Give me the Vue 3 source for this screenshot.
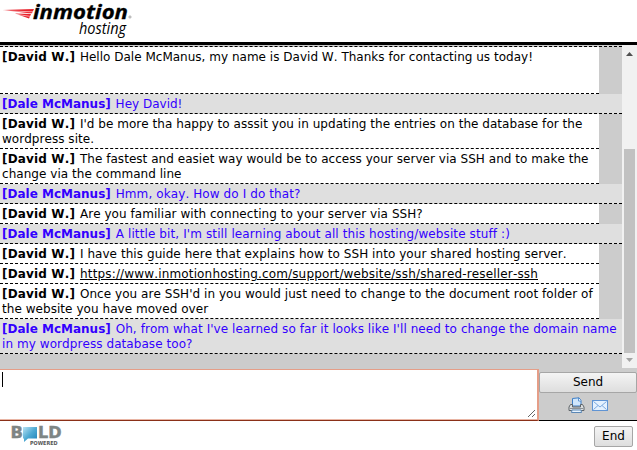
<template>
  <div class="chat-window">
    <header class="header">
      <svg class="logo" width="140" height="42" viewBox="0 0 140 42">
        <path d="M3 10 L34 9 L32 13.2 L29 13.2 Z" fill="#e8202a" />
        <path d="M15 13.5 L31 14 L29 18.5 Z" fill="#e8202a" />
        <path d="M4 10.8 L33 11.8 M16 14.3 L30 16.3" stroke="#fff" stroke-width="0.6" />
        <text x="33" y="19" class="logo-name" textLength="95" lengthAdjust="spacingAndGlyphs">inmotion</text>
        <circle cx="130" cy="17" r="1.1" class="logo-mark" />
        <text x="79" y="34" class="logo-sub" textLength="47" lengthAdjust="spacingAndGlyphs">hosting</text>
      </svg>
    </header>

    <main class="chat">
      <div class="messages">
        <div
          v-for="(message, index) in messages"
          :key="index"
          class="message"
          :class="[message.mine ? 'visitor' : 'operator', { first: index === 0 }]"
          :style="{ letterSpacing: `${message.spacing || 0}px` }"
        >
          <b class="name">[{{ message.mine ? 'Dale McManus' : 'David W.' }}]</b>&nbsp;<a v-if="message.link" class="link">{{ message.text }}</a><template v-else>{{ message.text }}</template>
        </div>
      </div>
      <div class="scrollbar">
        <svg class="arrow" width="15" height="17" viewBox="0 0 15 17">
          <path d="M4 11 L7.5 7 L11 11 Z" fill="#505050" />
        </svg>
        <div class="track">
          <div class="thumb"></div>
        </div>
        <svg class="arrow" width="15" height="15" viewBox="0 0 15 15">
          <path d="M4 5 L11 5 L7.5 9 Z" fill="#a3a3a3" />
        </svg>
      </div>
    </main>

    <section class="compose">
      <div class="input">
        <div class="caret"></div>
        <svg class="grip" width="9" height="9" viewBox="0 0 9 9">
          <path d="M1 8 L8 1 M5 8 L8 5" stroke="#555" stroke-width="0.9" fill="none" />
        </svg>
      </div>
      <div class="actions">
        <button class="send" @click="send">Send</button>
        <div class="icons">
          <svg width="17" height="17" viewBox="0 0 17 17">
            <path d="M4.5 9 V1.5 L11 0.8 L13 3.5 V9 Z" fill="#cfe6fc" stroke="#3f7fc6" />
            <path d="M10.5 1 V4 H13" fill="#fff" stroke="#3f7fc6" stroke-width="0.8" />
            <path d="M2.5 7.5 H4.5 V10 H12.5 V7.5 H14.5 L16 10 V13.5 H1 V10 Z" fill="#dcdfe1" stroke="#5f6569" />
            <path d="M2 11.5 H15" stroke="#8d9296" />
            <path d="M4 13 H13 L13.5 15.5 H3.5 Z" fill="#e9f4ff" stroke="#5a87b5" />
          </svg>
          <svg width="17" height="17" viewBox="0 0 17 17">
            <rect x="0.5" y="3.5" width="15" height="10" fill="#e4f1ff" stroke="#6094d4" />
            <path d="M1.5 4.5 L8 10 L14.5 4.5 M1.5 12.5 L6 8.5 M14.5 12.5 L10 8.5" fill="none" stroke="#7caae0" />
          </svg>
        </div>
      </div>
    </section>

    <footer class="footer">
      <svg class="bold-logo" width="54" height="21" viewBox="0 0 54 21">
        <defs>
          <linearGradient id="bubble" x1="0" y1="0" x2="1" y2="1">
            <stop offset="0" stop-color="#b9e2f3" />
            <stop offset="0.5" stop-color="#4eaad3" />
            <stop offset="1" stop-color="#1d80b6" />
          </linearGradient>
        </defs>
        <text x="-0.5" y="12" class="bold-name" textLength="12.5" lengthAdjust="spacingAndGlyphs">B</text>
        <path d="M12 1 H26 V12.5 H17 L13 16 V12.5 H12 Z" fill="url(#bubble)" />
        <text x="27" y="12" class="bold-name" textLength="23.5" lengthAdjust="spacingAndGlyphs">LD</text>
        <text x="19" y="18.5" class="bold-sub" textLength="27.5" lengthAdjust="spacingAndGlyphs">POWERED</text>
      </svg>
      <button class="end">End</button>
    </footer>
  </div>
</template>

<script setup>
import { ref } from 'vue'

const messages = ref([
  { spacing: 0.015, text: 'Hello Dale McManus, my name is David W. Thanks for contacting us today!' },
  { mine: true, text: 'Hey David!' },
  { spacing: 0.04, text: "I'd be more tha happy to asssit you in updating the entries on the database for the wordpress site." },
  { spacing: 0.04, text: 'The fastest and easiet way would be to access your server via SSH and to make the change via the command line' },
  { mine: true, spacing: 0.1, text: 'Hmm, okay. How do I do that?' },
  { spacing: 0.055, text: 'Are you familiar with connecting to your server via SSH?' },
  { mine: true, spacing: 0.11, text: "A little bit, I'm still learning about all this hosting/website stuff :)" },
  { spacing: 0.06, text: 'I have this guide here that explains how to SSH into your shared hosting server.' },
  { link: true, spacing: 0.157, text: 'https://www.inmotionhosting.com/support/website/ssh/shared-reseller-ssh' },
  { spacing: 0.05, text: "Once you are SSH'd in you would just need to change to the document root folder of the website you have moved over" },
  { mine: true, spacing: 0.07, text: "Oh, from what I've learned so far it looks like I'll need to change the domain name in my wordpress database too?" }
])

const draft = ref('')

const send = () => {
  if (!draft.value) return
  messages.value.push({ mine: true, text: draft.value })
  draft.value = ''
}
</script>

<style>
body {
  margin: 0;
  background: #fff;
}
</style>

<style scoped>
.chat-window {
  display: flex;
  flex-direction: column;
  width: 637px;
  height: 450px;
  overflow: hidden;
  background: #fff;
  color: #000;
  font-family: 'DejaVu Sans', Verdana, sans-serif;
  font-size: 12px;
  font-kerning: none;
  line-height: 15px;
}

.header {
  height: 42px;
  border-bottom: 3px solid #000;
}

.logo {
  display: block;
}

.logo-name {
  font: italic bold 19px 'Open Sans', sans-serif;
  stroke: #000;
  stroke-width: 0.3;
}

.logo-sub {
  font: italic 15.5px 'Open Sans', sans-serif;
}

.logo-mark {
  fill: none;
  stroke: #777;
  stroke-width: 0.6;
}

.chat {
  display: flex;
  height: 323px;
  background: #ccc;
}

.messages {
  flex: 1;
  margin-top: 1px;
  border-top: 1px dashed #000;
}

.message {
  box-sizing: border-box;
  padding: 3px 2px 1px;
  border-bottom: 1px dashed #000;
}

.operator {
  width: 599px;
  background: #fff;
}

.visitor {
  background: #dfdfdf;
  color: #30f;
}

.first {
  height: 47px;
}

.name {
  margin-right: 1px;
  letter-spacing: 0;
}

.operator .name {
  letter-spacing: 0.15px;
}

.link {
  color: #000;
  text-decoration: underline;
}

.scrollbar {
  display: flex;
  flex-direction: column;
  width: 15px;
  background: #f1f1f1;
}

.arrow {
  display: block;
}

.track {
  flex: 1;
  padding: 87px 2px 0;
}

.thumb {
  height: 204px;
  background: #c1c1c1;
}

.compose {
  display: flex;
  box-sizing: border-box;
  height: 53px;
  padding-top: 1px;
  border-bottom: 1px solid #000;
  background: #ccc;
}

.input {
  position: relative;
  box-sizing: border-box;
  width: 539px;
  height: 52px;
  padding: 2px;
  border: 1px solid #e59e88;
  border-left: 0;
  border-right-width: 2px;
  border-bottom-color: #8a3018;
  background: #fff;
  box-shadow: inset 0 -1px #e9b5a4;
}

.caret {
  width: 1px;
  height: 15px;
  background: #000;
}

.grip {
  position: absolute;
  right: 1px;
  bottom: 2px;
}

.actions {
  flex: 1;
  padding-top: 3px;
}

button {
  box-sizing: border-box;
  border: 1px solid #a6a6a6;
  border-radius: 2px;
  background: linear-gradient(#f4f4f4, #dedede);
  color: #000;
  font: 12px/15px 'DejaVu Sans', Verdana, sans-serif;
}

.send {
  display: block;
  width: 100%;
  height: 21px;
  padding: 0;
}

.icons {
  display: flex;
  gap: 7px;
  padding: 4px 0 0 29px;
}

.footer {
  display: flex;
  justify-content: space-between;
  padding: 5px 4px 0 11px;
}

.bold-logo {
  overflow: visible;
}

.bold-name {
  fill: #7e8584;
  stroke: #7e8584;
  stroke-width: 0.4;
  font: bold 15px 'DejaVu Sans', sans-serif;
}

.bold-sub {
  fill: #555;
  font: bold 5.5px 'DejaVu Sans', sans-serif;
}

.end {
  width: 39px;
  height: 21px;
  padding: 0;
}
</style>
